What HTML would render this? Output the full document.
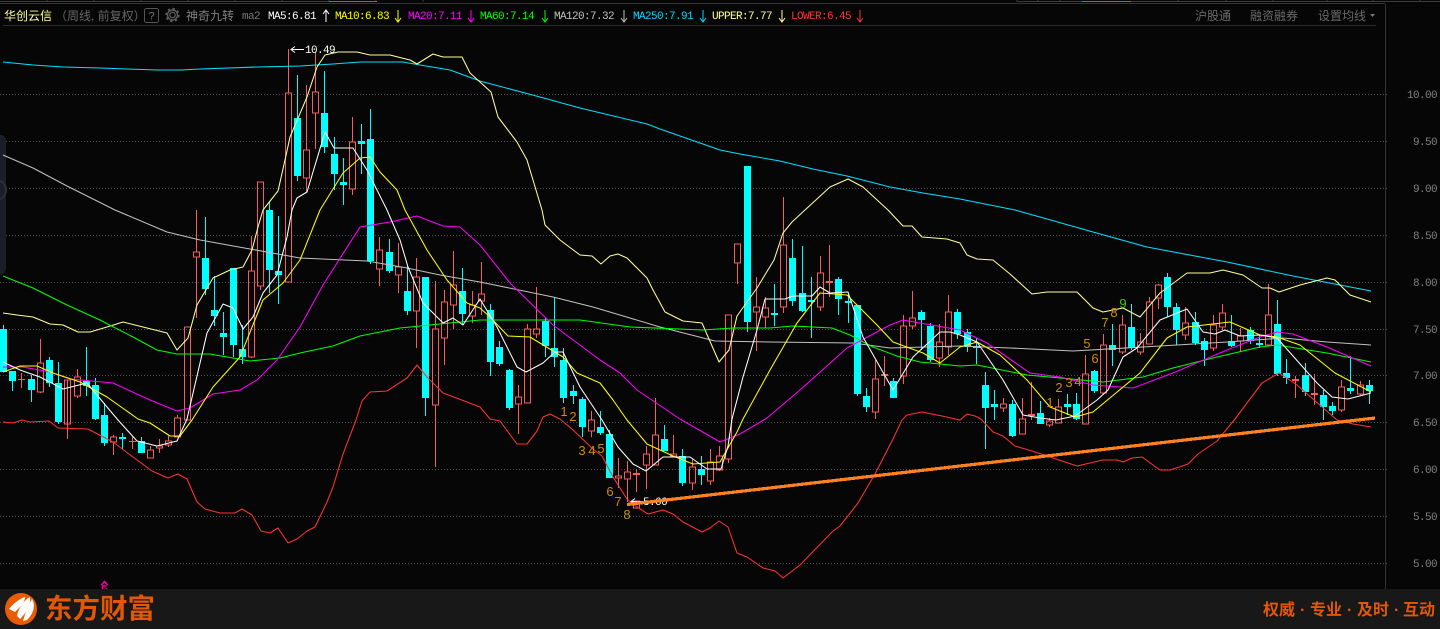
<!DOCTYPE html>
<html lang="zh"><head><meta charset="utf-8"><title>华创云信</title>
<style>
html,body{margin:0;padding:0;width:1440px;height:629px;overflow:hidden;background:#060606}
svg{display:block}
.m{font-family:"Liberation Mono","DejaVu Sans Mono",monospace;font-size:11px;letter-spacing:-.6px}
.c{font-family:"Liberation Sans","WenQuanYi Zen Hei","Noto Sans CJK SC",sans-serif;font-size:12px}
.n{font-family:"Liberation Sans",sans-serif;font-size:13px;text-anchor:middle;fill:#d58a00}
.b{font-family:"Liberation Sans","Noto Sans CJK SC",sans-serif;font-size:16px;font-weight:700;fill:#e25806}
polyline{fill:none;stroke-width:1.05;stroke-linejoin:round}
</style></head><body>
<svg width="1440" height="629" viewBox="0 0 1440 629" xmlns="http://www.w3.org/2000/svg">
<rect width="1440" height="629" fill="#060606"/>
<path d="M0 3.5H1385" stroke="#333" shape-rendering="crispEdges"/>
<path d="M0 1.5H329M1017 1.5H1082M1131 1.5H1440" stroke="#3c3c3c" shape-rendering="crispEdges"/>
<path d="M47 0V2M94 0V2M141 0V2M188 0V2M235 0V2M282 0V2M329 0V2M376 0V2M423 0V2M1017 0V2M1038 0V2M1060 0V2M1178 0V2M1226 0V2M1273 0V2M1327 0V2M1373 0V2M1420 0V2" stroke="#3c3c3c" shape-rendering="crispEdges"/>
<path d="M329 1.5H377M1082 1.5H1131" stroke="#d9500f" shape-rendering="crispEdges"/>
<path d="M3 25.5H1376" stroke="#2c2c2c" shape-rendering="crispEdges"/>
<path d="M1385.5 4V589" stroke="#333" shape-rendering="crispEdges"/>
<g stroke="#4c4c4c" stroke-dasharray="1 2" shape-rendering="crispEdges">
<path d="M0 94.5H1388M0 141.5H1388M0 188.5H1388M0 235.5H1388M0 282.5H1388M0 329.5H1388M0 375.5H1388M0 422.5H1388M0 469.5H1388M0 516.5H1388M0 563.5H1388"/>
</g>
<!-- left handle -->
<path d="M0 135H1a5 5 0 0 1 5 5V268a7 7 0 0 1-6 7Z" fill="#1a1e26"/>
<circle cx="-4" cy="190" r="10" fill="none" stroke="#2c2f36" stroke-width="2"/>
<!-- header -->
<text class="c" x="4" y="20" fill="#ffff99">华创云信</text>
<text class="c" x="55" y="20" fill="#666">（周线, 前复权）</text>
<rect x="144.5" y="8.5" width="14" height="14" rx="2" fill="none" stroke="#555"/>
<text class="m" x="148.5" y="19.5" fill="#777">?</text>
<circle cx="172.5" cy="15" r="2.7" fill="none" stroke="#5c5c5c" stroke-width="1.3"/>
<circle cx="172.5" cy="15" r="5" fill="none" stroke="#5c5c5c" stroke-width="1.4"/>
<circle cx="172.5" cy="15" r="6.4" fill="none" stroke="#5c5c5c" stroke-width="1.6" stroke-dasharray="2.4 2.6"/>
<text class="c" x="186" y="20" fill="#808080">神奇九转</text>
<text class="m" x="242" y="19" fill="#777">ma2</text>
<text class="m" x="268" y="19" fill="#fff">MA5:6.81</text>
<text class="m" x="335" y="19" fill="#ff0">MA10:6.83</text>
<text class="m" x="408" y="19" fill="#f0f">MA20:7.11</text>
<text class="m" x="480" y="19" fill="#0f0">MA60:7.14</text>
<text class="m" x="554" y="19" fill="#c0c0c0">MA120:7.32</text>
<text class="m" x="633" y="19" fill="#00d8ff">MA250:7.91</text>
<text class="m" x="712" y="19" fill="#ff9">UPPER:7.77</text>
<text class="m" x="791" y="19" fill="#f33">LOWER:6.45</text>
<g fill="none" stroke-width="1">
<path d="M326 22V10M323 14l3-4 3 4" stroke="#fff"/>
<path d="M398 10V22M395 18l3 4 3-4" stroke="#ff0"/>
<path d="M471 10V22M468 18l3 4 3-4" stroke="#f0f"/>
<path d="M545 10V22M542 18l3 4 3-4" stroke="#0f0"/>
<path d="M624 10V22M621 18l3 4 3-4" stroke="#c0c0c0"/>
<path d="M703 10V22M700 18l3 4 3-4" stroke="#00d8ff"/>
<path d="M782 10V22M779 18l3 4 3-4" stroke="#ff9"/>
<path d="M860 10V22M857 18l3 4 3-4" stroke="#f33"/>
</g>
<text class="c" x="1195" y="20" fill="#6a6a6a">沪股通</text>
<text class="c" x="1250" y="20" fill="#6a6a6a">融资融券</text>
<text class="c" x="1318" y="20" fill="#6a6a6a">设置均线</text>
<path d="M1370 14h5l-2.5 3z" fill="#777"/>
<!-- axis -->
<g class="m" fill="#808080" text-anchor="end">
<text x="1437" y="98">10.00</text><text x="1437" y="145">9.50</text><text x="1437" y="192">9.00</text><text x="1437" y="239">8.50</text><text x="1437" y="286">8.00</text><text x="1437" y="333">7.50</text><text x="1437" y="379">7.00</text><text x="1437" y="426">6.50</text><text x="1437" y="473">6.00</text><text x="1437" y="520">5.50</text><text x="1437" y="567">5.00</text>
</g>
<!-- red candles -->
<path shape-rendering="crispEdges" fill="none" stroke="#f85c5c" d="M21.5 373V388M18 379.5h7
M40.5 339V363M40.5 392V393M37.5 363h6V392h-6z
M67.5 380V424M67.5 424V439M64.5 380h6V424h-6z
M77.5 369V377M77.5 396V398M74.5 377h6V396h-6z
M113.5 435V437M113.5 442V455M110.5 437h6V442h-6z
M132.5 437V449M129 441.5h7
M150.5 446V450M147.5 450h6V458h-6z
M159.5 439V446M159.5 448V453M156.5 446h6V448h-6z
M168.5 436V441M168.5 445V447M165.5 441h6V445h-6z
M177.5 415V418M174.5 418h6V437h-6z
M184.5 327h6V420h-6z
M196.5 210V252M196.5 257V318M193.5 252h6V257h-6z
M251.5 236V271M251.5 357V358M248.5 271h6V357h-6z
M260.5 286V290M257.5 182h6V286h-6z
M288.5 49V93M285.5 93h6V282h-6z
M306.5 85V150M306.5 178V192M303.5 150h6V178h-6z
M315.5 52V92M315.5 113V149M312.5 92h6V113h-6z
M352.5 117V142M352.5 189V195M349.5 142h6V189h-6z
M379.5 237V250M379.5 269V286M376.5 250h6V269h-6z
M398.5 243V267M398.5 275V293M395.5 267h6V275h-6z
M416.5 258V277M416.5 311V348M413.5 277h6V311h-6z
M435.5 281V329M435.5 405V467M432.5 329h6V405h-6z
M444.5 290V302M444.5 338V365M441.5 302h6V338h-6z
M453.5 251V285M453.5 305V329M450.5 285h6V305h-6z
M472.5 291V305M472.5 316V323M469.5 305h6V316h-6z
M481.5 262V294M481.5 301V315M478.5 294h6V301h-6z
M518.5 385V397M518.5 404V434M515.5 397h6V404h-6z
M527.5 324V329M524.5 329h6V403h-6z
M536.5 287V329M536.5 334V338M533.5 329h6V334h-6z
M591.5 411V420M591.5 431V437M588.5 420h6V431h-6z
M618.5 458V476M618.5 478V488M615.5 476h6V478h-6z
M627.5 461V472M627.5 479V502M624.5 472h6V479h-6z
M636.5 469V492M633 473.5h7M633 474.5h7
M633.5 501h6V508h-6z
M646.5 446V454M646.5 465V489M643.5 454h6V465h-6z
M655.5 398V435M652.5 435h6V465h-6z
M673.5 435V454M670.5 454h6V456h-6z
M692.5 459V467M692.5 483V490M689.5 467h6V483h-6z
M710.5 449V462M710.5 481V485M707.5 462h6V481h-6z
M719.5 446V456M719.5 470V471M716.5 456h6V470h-6z
M728.5 459V463M725.5 315h6V459h-6z
M737.5 263V284M734.5 244h6V263h-6z
M756.5 277V307M756.5 312V351M753.5 307h6V312h-6z
M765.5 297V308M765.5 317V328M762.5 308h6V317h-6z
M783.5 197V245M783.5 307V313M780.5 245h6V307h-6z
M820.5 256V273M820.5 307V311M817.5 273h6V307h-6z
M829.5 245V297M826 281.5h7M826 282.5h7
M875.5 360V379M875.5 412V419M872.5 379h6V412h-6z
M884.5 356V386M881 374.5h7M881 375.5h7
M903.5 315V326M903.5 376V384M900.5 326h6V376h-6z
M912.5 291V318M912.5 326V329M909.5 318h6V326h-6z
M939.5 324V342M939.5 358V367M936.5 342h6V358h-6z
M948.5 295V312M948.5 347V355M945.5 312h6V347h-6z
M1003.5 398V404M1003.5 408V412M1000.5 404h6V408h-6z
M1022.5 398V419M1019.5 419h6V434h-6z
M1031.5 382V420M1028 414.5h7M1028 415.5h7
M1049.5 418V421M1049.5 425V427M1046.5 421h6V425h-6z
M1058.5 399V407M1055.5 407h6V423h-6z
M1085.5 355V374M1082.5 374h6V424h-6z
M1103.5 334V345M1103.5 393V394M1100.5 345h6V393h-6z
M1122.5 315V325M1122.5 352V354M1119.5 325h6V352h-6z
M1140.5 333V342M1140.5 352V355M1137.5 342h6V352h-6z
M1149.5 297V302M1146.5 302h6V344h-6z
M1158.5 284V285M1158.5 298V309M1155.5 285h6V298h-6z
M1185.5 307V323M1185.5 335V340M1182.5 323h6V335h-6z
M1213.5 315V325M1213.5 348V351M1210.5 325h6V348h-6z
M1222.5 304V313M1222.5 327V330M1219.5 313h6V327h-6z
M1240.5 328V336M1240.5 341V351M1237.5 336h6V341h-6z
M1268.5 284V315M1268.5 345V346M1265.5 315h6V345h-6z
M1295.5 376V398M1292 379.5h7M1292 380.5h7
M1314.5 374V405M1311 393.5h7M1311 394.5h7
M1341.5 380V387M1341.5 410V412M1338.5 387h6V410h-6z
M1360.5 381V385M1360.5 394V395M1357.5 385h6V394h-6z"/>
<!-- cyan wicks -->
<path shape-rendering="crispEdges" fill="none" stroke="#00ffff" d="M3.5 325V372M12.5 371V391M31.5 375V402M49.5 357V387M58.5 362V424M86.5 347V396M95.5 378V420M104.5 403V446M122.5 433V449M141.5 437V453M205.5 217V295M214.5 276V326M223.5 312V355M233.5 268V357M242.5 325V364M269.5 202V293M278.5 216V304M297.5 75V181M324.5 71V153M334.5 137V190M343.5 158V205M361.5 124V174M370.5 109V264M389.5 239V273M407.5 265V315M425.5 277V416M462.5 268V324M490.5 304V376M499.5 341V366M509.5 369V410M545.5 317V357M554.5 297V367M563.5 348V403M573.5 385V404M582.5 397V437M600.5 411V435M609.5 430V478M664.5 425V451M682.5 449V486M701.5 456V485M747.5 166V332M774.5 284V326M792.5 239V306M802.5 246V312M811.5 277V338M838.5 277V315M848.5 294V323M857.5 305V396M866.5 388V412M893.5 378V398M921.5 310V350M930.5 323V362M957.5 309V339M967.5 329V352M976.5 338V364M985.5 372V449M994.5 390V420M1012.5 400V437M1040.5 401V424M1067.5 394V415M1076.5 393V420M1094.5 370V393M1112.5 324V366M1131.5 304V350M1167.5 273V317M1176.5 303V345M1195.5 312V345M1204.5 338V366M1231.5 315V347M1250.5 327V344M1259.5 335V348M1277.5 300V376M1286.5 359V384M1305.5 363V396M1323.5 390V420M1332.5 402V415M1350.5 356V394M1369.5 380V404"/>
<!-- cyan bodies -->
<path shape-rendering="crispEdges" fill="#00ffff" d="M0 329h7V372H0zM9 371h7V381H9zM28 379h7V390h-7zM46 360h7V383h-7zM55 383h7V422h-7zM83 381h7V386h-7zM92 385h7V419h-7zM101 415h7V443h-7zM119 437h7V439h-7zM138 441h7V453h-7zM202 258h7V289h-7zM211 310h7V316h-7zM220 333h7V337h-7zM230 268h7V345h-7zM239 349h7V357h-7zM266 210h7V270h-7zM275 271h7V275h-7zM294 118h7V176h-7zM321 113h7V147h-7zM331 154h7V174h-7zM340 182h7V185h-7zM358 141h7V144h-7zM367 139h7V261h-7zM386 252h7V271h-7zM404 291h7V311h-7zM422 277h7V398h-7zM459 291h7V314h-7zM487 310h7V362h-7zM496 347h7V364h-7zM506 370h7V408h-7zM542 321h7V346h-7zM551 348h7V357h-7zM560 360h7V398h-7zM570 391h7V396h-7zM579 399h7V427h-7zM597 427h7V433h-7zM606 434h7V478h-7zM661 439h7V451h-7zM679 456h7V483h-7zM698 469h7V475h-7zM744 166h7V322h-7zM771 313h7V315h-7zM789 258h7V301h-7zM799 293h7V311h-7zM808 300h7V302h-7zM835 279h7V299h-7zM845 301h7V303h-7zM854 305h7V394h-7zM863 396h7V407h-7zM890 381h7V398h-7zM918 312h7V320h-7zM927 326h7V360h-7zM954 312h7V334h-7zM964 332h7V347h-7zM973 346h7V348h-7zM982 385h7V408h-7zM991 404h7V407h-7zM1009 404h7V436h-7zM1037 413h7V424h-7zM1064 404h7V407h-7zM1073 404h7V419h-7zM1091 371h7V391h-7zM1109 345h7V350h-7zM1128 327h7V348h-7zM1164 277h7V307h-7zM1173 307h7V330h-7zM1192 322h7V343h-7zM1201 341h7V350h-7zM1228 341h7V346h-7zM1247 330h7V341h-7zM1256 343h7V345h-7zM1274 324h7V374h-7zM1283 373h7V378h-7zM1302 375h7V392h-7zM1320 395h7V407h-7zM1329 406h7V411h-7zM1347 388h7V391h-7zM1366 385h7V391h-7z"/>
<!-- MAs -->
<polyline stroke="#c0c0c0" points="3,155 33,168 67,186 115,210 167,232 200,240 250,249 300,258 367,261 407,268 440,275 480,282 553,297 593,307 630,318 660,327 715,341 770,342 853,343 890,348 960,346 1010,348 1073,351 1160,346 1227,342 1283,338 1327,342 1371,345"/>
<polyline stroke="#00e0ff" points="3,62 33,65 63,67 100,68 127,69 157,70 182,70 200,69 257,67 300,66 333,64 360,62 403,62 420,65 450,70 480,81 540,97 580,108 647,124 660,129 720,150 740,154 780,161 813,169 847,176 890,187 923,193 960,199 1015,210 1040,217 1093,232 1147,247 1227,262 1293,276 1340,285 1371,291"/>
<polyline stroke="#ffff99" points="3,313 17,315 33,317 50,324 63,325 78,332 90,332 107,327 123,322 143,327 167,333 177,350 188,338 197,305 213,278 230,270 243,267 252,250 258,227 263,210 278,191 285,160 290,137 307,97 317,67 325,55 338,52 347,52 357,52 370,55 390,55 410,60 417,64 433,54 443,57 462,57 470,73 480,82 491,92 498,117 517,142 527,160 542,210 545,225 560,240 580,255 592,256 601,264 610,256 618,254 627,258 647,278 653,290 665,312 683,321 702,323 719,362 729,350 737,316 757,288 774,260 783,233 792,222 805,210 830,187 848,179 863,187 888,210 903,226 912,226 922,237 947,239 960,243 967,255 977,259 993,260 1010,274 1032,294 1047,292 1077,292 1093,308 1103,312 1123,308 1140,317 1160,293 1187,273 1210,273 1223,270 1243,275 1262,288 1270,288 1279,292 1300,285 1327,278 1335,280 1350,295 1371,302"/>
<polyline stroke="#ff3333" points="3,422 13,423 22,420 30,422 49,421 58,428 88,429 113,442 133,457 152,471 168,478 178,474 187,479 197,502 205,509 220,513 235,513 242,509 252,515 261,531 270,533 278,528 288,543 297,539 307,531 315,527 327,502 333,487 343,454 356,420 362,401 370,392 387,391 407,378 417,365 427,377 443,393 467,402 480,407 490,419 500,421 517,444 527,444 537,431 543,417 550,414 560,419 572,429 593,449 602,456 613,477 627,499 637,507 648,514 663,510 673,514 683,522 702,532 710,528 719,521 728,527 737,553 747,557 763,568 775,571 783,578 800,565 833,531 840,526 858,503 875,474 893,439 902,420 907,415 922,412 942,416 960,420 967,414 975,416 981,419 993,432 1003,436 1015,446 1032,451 1047,456 1077,466 1103,460 1117,460 1123,462 1132,458 1142,457 1160,470 1170,470 1188,464 1198,454 1217,441 1235,419 1262,383 1279,373 1297,385 1337,420 1353,424 1371,427"/>
<polyline stroke="#00ff00" points="3,276 33,288 67,305 100,320 133,337 157,350 177,354 210,354 250,361 280,358 300,353 333,346 360,336 400,328 480,320 580,320 630,327 703,330 733,328 770,328 793,326 832,328 850,335 873,347 897,356 920,362 960,366 977,365 1027,375 1060,378 1103,382 1143,377 1173,368 1213,358 1260,347 1277,345 1327,353 1371,362"/>
<polyline stroke="#ff00ff" points="3,367 23,367 50,372 70,379 113,383 150,400 177,411 190,408 213,394 240,390 257,380 277,360 300,327 323,285 360,227 390,222 417,216 443,226 460,227 480,245 510,283 553,325 600,360 620,373 637,390 680,419 720,442 740,434 767,418 800,390 847,348 890,325 903,320 960,330 987,343 1030,373 1060,377 1093,385 1133,388 1173,373 1227,350 1260,337 1277,332 1293,334 1327,347 1371,366"/>
<polyline stroke="#ffff00" points="3,372 20,366 37,366 53,373 80,382 107,397 138,419 150,423 170,436 180,436 192,420 213,387 240,357 263,300 283,283 300,260 320,210 343,173 360,158 370,157 380,172 397,190 405,210 427,250 447,280 467,303 480,308 490,317 508,336 530,337 563,357 577,373 600,383 613,400 627,420 647,444 673,456 693,464 720,462 737,432 743,419 770,370 797,323 820,293 847,295 877,325 893,342 923,353 940,363 960,347 977,342 1000,355 1027,380 1050,407 1075,417 1093,412 1140,373 1167,338 1187,327 1230,322 1260,335 1277,337 1300,345 1335,373 1371,392"/>
<polyline stroke="#ffffff" points="3,362 20,370 40,377 63,389 87,383 107,407 118,420 137,441 157,446 177,441 187,419 207,333 223,304 233,308 243,329 253,317 263,293 277,275 287,237 292,210 297,198 307,192 325,132 334,148 353,148 367,170 387,210 400,240 408,267 423,303 443,323 453,318 463,325 480,299 497,327 517,367 526,372 543,363 555,352 563,352 580,387 602,420 618,447 633,464 646,471 663,457 690,457 707,469 721,469 728,446 732,419 743,377 757,330 765,299 785,299 793,296 812,296 820,287 830,293 848,292 863,337 893,390 913,357 940,332 950,332 960,335 977,342 1003,380 1023,415 1040,418 1056,420 1075,416 1097,400 1108,390 1123,357 1137,348 1160,320 1187,309 1203,332 1215,334 1225,330 1240,336 1260,335 1277,338 1317,383 1332,397 1348,399 1371,393"/>
<!-- labels -->
<path d="M304 49.5H291M295 46.5l-4 3 4 3" fill="none" stroke="#fff"/>
<text class="m" x="305" y="53" fill="#fff">10.49</text>
<path d="M641 501.5H631M635 498.5l-4 3 4 3" fill="none" stroke="#fff"/>
<text class="m" x="643" y="505" fill="#fff">5.66</text>
<g class="n">
<text x="564" y="416">1</text><text x="573" y="421">2</text><text x="582" y="455">3</text><text x="592" y="455">4</text><text x="601" y="453">5</text><text x="610" y="496">6</text><text x="618" y="506">7</text><text x="627" y="519" style="fill:#b89a10">8</text>
<text x="1050" y="407">1</text><text x="1059" y="392">2</text><text x="1069" y="387">3</text><text x="1078" y="386">4</text><text x="1087" y="348">5</text><text x="1095" y="363">6</text><text x="1105" y="327">7</text><text x="1114" y="317">8</text><text x="1123" y="308" style="fill:#44cc00">9</text>
</g>
<path d="M627 504.5 1375 418" stroke="#ff8020" stroke-width="3.2" fill="none" shape-rendering="crispEdges"/>
<path d="M101.5 585l3-3.5 3 3.5M102.5 589v-3h4M106.5 589v-1" fill="none" stroke="#f000a8" stroke-width="1.6"/>
<!-- footer -->
<rect x="0" y="589" width="1440" height="40" fill="#181818"/>
<circle cx="21" cy="609" r="16" fill="#e85c06"/>
<path d="M9 609C13 604 19 599 25 597C25 603 20 607 15 612Z" fill="#fff"/>
<path d="M17 616C18 609 24 600 30 597C31 605 26 613 20 619Z" fill="#fff"/>
<path d="M23 621C25 613 29 604 32 599C35 604 35 612 27 620Z" fill="#fff"/>
<text x="45" y="618" style="font-family:'Liberation Sans','Noto Sans CJK SC',sans-serif;font-size:27.5px;font-weight:700" fill="#e25806">东方财富</text>
<text class="b" x="1263" y="615">权威</text>
<text class="b" x="1300" y="615">·</text>
<text class="b" x="1310" y="615">专业</text>
<text class="b" x="1347" y="615">·</text>
<text class="b" x="1357" y="615">及时</text>
<text class="b" x="1394" y="615">·</text>
<text class="b" x="1403" y="615">互动</text>
</svg>
</body></html>
